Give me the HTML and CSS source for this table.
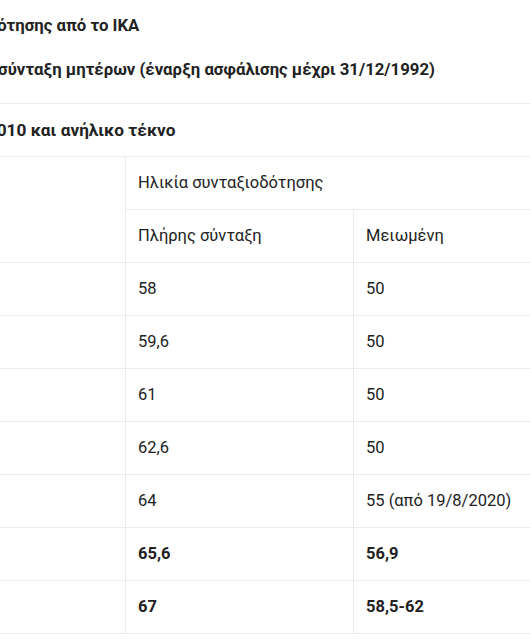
FILE: index.html
```html
<!DOCTYPE html>
<html lang="el">
<head>
<meta charset="utf-8">
<link rel="stylesheet" href="styles.css">
</head>
<body>
<div class="page">
  <div class="titles">
    <div class="title">Τα νέα όρια συνταξιοδότησης από το ΙΚΑ</div>
    <div class="title">Πλήρης και μειωμένη σύνταξη μητέρων (έναρξη ασφάλισης μέχρι 31/12/1992)</div>
  </div>
  <div class="grid">
    <div class="cell caption">Θεμελίωση έως το 2010 και ανήλικο τέκνο</div>
    <div class="cell head1">Έτος</div>
    <div class="cell c2 span2">Ηλικία συνταξιοδότησης</div>
    <div class="cell c2">Πλήρης σύνταξη</div>
    <div class="cell c3">Μειωμένη</div>

    <div class="cell c1">2010</div><div class="cell c2">58</div><div class="cell c3">50</div>
    <div class="cell c1">2011</div><div class="cell c2">59,6</div><div class="cell c3">50</div>
    <div class="cell c1">2012</div><div class="cell c2">61</div><div class="cell c3">50</div>
    <div class="cell c1">2013</div><div class="cell c2">62,6</div><div class="cell c3">50</div>
    <div class="cell c1">2014</div><div class="cell c2">64</div><div class="cell c3">55 (από 19/8/2020)</div>
    <div class="cell c1 b">2015</div><div class="cell c2 b">65,6</div><div class="cell c3 b">56,9</div>
    <div class="cell c1 b">2016</div><div class="cell c2 b">67</div><div class="cell c3 b">58,5-62</div>
  </div>
</div>
</body>
</html>
```

FILE: styles.css
```css
html, body {
  margin: 0;
  padding: 0;
  background: #fff;
  overflow: hidden;
}
body {
  font-family: Roboto, "Noto Sans", sans-serif;
  font-size: 16.5px;
  color: #222;
}
.page {
  margin-left: -175px;
  width: 900px;
}
.titles {
  padding: 13px 12px 22px 1px;
  display: flex;
  flex-direction: column;
  gap: 20px;
  border-bottom: 1px solid #ebebeb;
}
.title {
  font-weight: 700;
  font-size: 16.75px;
  line-height: 24px;
  white-space: nowrap;
}
.grid {
  display: grid;
  grid-template-columns: 300px 228px 1fr;
}
.cell {
  height: 53px;
  box-sizing: border-box;
  border-bottom: 1px solid #ebebeb;
  padding: 0 12px;
  display: flex;
  align-items: center;
  white-space: nowrap;
  line-height: 24px;
}
.caption {
  grid-column: 1 / 4;
  font-weight: 700;
  font-size: 17.25px;
  padding-left: 7px;
}
.head1 {
  grid-row: span 2;
  height: 106px;
}
.span2 {
  grid-column: 2 / 4;
}
.c2 {
  border-left: 1px solid #ebebeb;
}
.c3 {
  border-left: 1px solid #ebebeb;
}
.b {
  font-weight: 700;
}
```
